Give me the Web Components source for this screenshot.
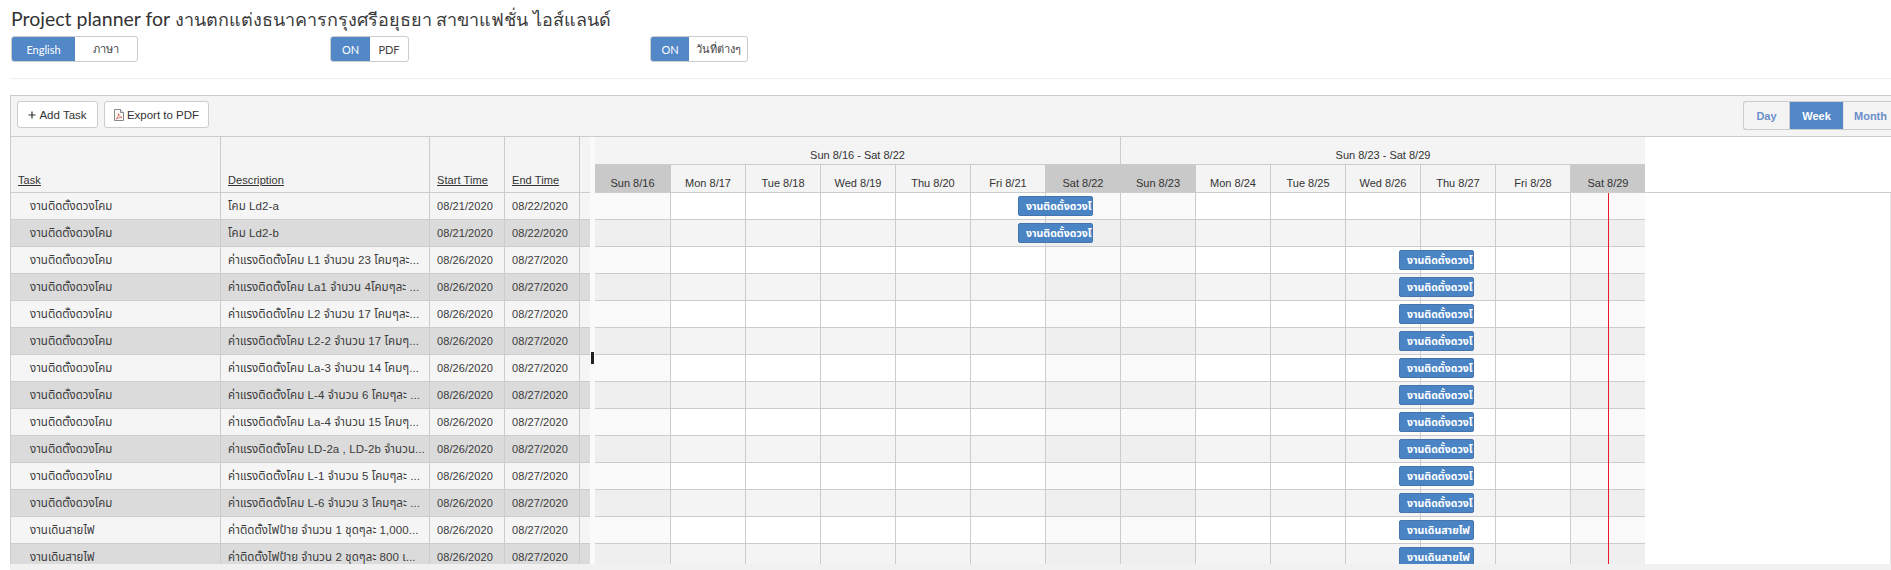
<!DOCTYPE html>
<html lang="th"><head><meta charset="utf-8"><title>Project planner</title>
<style>
html,body{margin:0;padding:0;height:570px;overflow:hidden;background:#fff;color:#333;font:11px "Liberation Sans","Noto Sans",sans-serif}
</style></head><body>
<planner-app></planner-app>
<script>
const SANS='"Liberation Sans","Noto Sans","Noto Sans Thai",sans-serif';
const def=(name,css,html,init)=>customElements.define(name,class extends HTMLElement{
  connectedCallback(){ if(this.shadowRoot)return; const r=this.attachShadow({mode:'open'}); r.innerHTML=`<style>${css}</style>${typeof html==='function'?html(this):html}`; init&&init(r,this);}
});

def('toggle-pair',`
:host{display:inline-flex;height:26px;box-sizing:border-box;border:1px solid #ccc;border-radius:3px;overflow:hidden;background:#fff;font:11px Lato,"Noto Sans",sans-serif;color:#444}
span{display:flex;align-items:center;justify-content:center;box-sizing:border-box}
.on{background:#5288c8;color:#fff;width:var(--on,38px)}
.off{flex:1}
`,h=>`<span class="on">${h.getAttribute('on')}</span><span class="off">${h.getAttribute('off')}</span>`);

def('tool-button',`
:host{display:inline-flex;align-items:center;justify-content:center;gap:3px;box-sizing:border-box;height:27px;border:1px solid #ccc;border-radius:3px;background:#fff;font:11.5px ${SANS};color:#333}
`,`<slot></slot>`);

def('range-switch',`
:host{display:flex;height:29px;box-sizing:border-box;border:1px solid #ccc;border-right:0;border-radius:3px 0 0 3px;font:700 11px ${SANS};color:#6b8fc9;background:#f4f4f4;width:148px;flex:none}
span{display:flex;align-items:center;justify-content:center}
.d{width:45px}.w{width:54px;background:#5288c8;color:#fff;border-left:1px solid #ccc;box-sizing:border-box}.m{width:48px;border-left:1px solid #e4e4e4;box-sizing:border-box;padding-left:6px}
`,`<span class="d">Day</span><span class="w">Week</span><span class="m">Month</span>`);

def('task-row',`
:host{display:grid;grid-template-columns:210px 209px 75px 75px 10px;height:27px;box-sizing:border-box;border-bottom:1px solid #ccc;background:#f5f5f5;color:#3a3a3a;font:11px ${SANS}}
:host([alt]){background:#dbdbdb}
div{box-sizing:border-box;border-right:1px solid #ccc;padding:1px 0 0 7px;display:flex;align-items:center;white-space:pre;overflow:hidden;line-height:25px}
.t{padding-left:19px;font-size:11.5px}
.ds{font-size:11.5px;letter-spacing:.08px}
.dt{letter-spacing:.08px}
div:last-child{border:0}
`,h=>`<div class="t">${h.getAttribute('task')}</div><div class="ds">${h.getAttribute('desc')}</div><div class="dt">${h.getAttribute('start')}</div><div class="dt">${h.getAttribute('end')}</div><div></div>`);

def('gantt-row',`
:host{display:grid;grid-template-columns:76px repeat(12,75px) 74px;height:27px;box-sizing:border-box;border-bottom:1px solid #ccc;background:#fff;position:relative;width:1050px}
:host([alt]){background:#f4f4f4}
i{display:block;border-right:1px solid #ccc;box-sizing:border-box}
i.we{background:#fafafa}
:host([alt]) i.we{background:#efefef}
i:last-of-type{border-right:0}
.bar{position:absolute;top:3px;height:20px;width:75px;box-sizing:border-box;border:1px solid #4475ad;border-radius:2px;background:#4a84c5;color:#fff;font:700 10.5px ${SANS};line-height:19px;padding-left:7px;white-space:nowrap;overflow:hidden}
`,h=>{let s='';for(let i=0;i<14;i++)s+=`<i class="${[0,6,7,13].includes(i)?'we':''}"></i>`;
 return s+`<div class="bar" style="left:${h.getAttribute('left')}px">${h.getAttribute('label')}</div>`});

def('task-table',`
:host{display:block;width:579px;flex:none}
.head{display:grid;grid-template-columns:210px 209px 75px 75px 10px;height:56px;box-sizing:border-box;border-bottom:1px solid #ccc;background:#f4f4f4}
.head div{box-sizing:border-box;border-right:1px solid #ccc;padding:0 0 5px 7px;display:flex;align-items:flex-end;font:11px ${SANS};color:#333;white-space:nowrap}
.head div span{text-decoration:underline;line-height:14px;letter-spacing:.08px}
.head div:last-child{border:0}
`,`<div class="head"><div><span>Task</span></div><div><span>Description</span></div><div><span>Start Time</span></div><div><span>End Time</span></div><div></div></div><slot></slot>`);

def('gantt-chart',`
:host{display:block;flex:1;min-width:0;overflow:hidden;position:relative}
.head{display:block;height:56px;box-sizing:border-box;border-bottom:1px solid #ccc}
.grid{width:1050px;height:55px;background:#f4f4f4;font:11px ${SANS};color:#333}
.wk{display:grid;grid-template-columns:526px 524px;height:28px;box-sizing:border-box;border-bottom:1px solid #ccc}
.wk div{display:flex;justify-content:center;padding-top:11px;box-sizing:border-box;line-height:14px}
.wk div:first-child{border-right:1px solid #ccc}
.dy{display:grid;grid-template-columns:76px repeat(12,75px) 74px;height:27px}
.dy div{display:flex;justify-content:center;padding-top:11px;box-sizing:border-box;line-height:14px;border-right:1px solid #ccc}
.dy div:last-child{border-right:0}
.dy .we{background:#c9c9c9;border-right-color:#c9c9c9}
.now{position:absolute;left:1013px;top:56px;bottom:0;width:1px;background:#e8172a}
.edge{position:absolute;right:0;top:56px;bottom:0;width:1px;background:#e4e4e4}
`,()=>{const n=['Sun 8/16','Mon 8/17','Tue 8/18','Wed 8/19','Thu 8/20','Fri 8/21','Sat 8/22','Sun 8/23','Mon 8/24','Tue 8/25','Wed 8/26','Thu 8/27','Fri 8/28','Sat 8/29'];
 return `<div class="head"><div class="grid"><div class="wk"><div>Sun 8/16 - Sat 8/22</div><div>Sun 8/23 - Sat 8/29</div></div><div class="dy">${n.map((d,i)=>`<div class="${[0,6,7,13].includes(i)?'we':''}">${d}</div>`).join('')}</div></div></div><slot></slot><div class="now"></div><div class="edge"></div>`});

def('gantt-panel',`
:host{display:block;margin-left:10px;height:475px;box-sizing:border-box;border-top:1px solid #ccc;overflow:hidden;position:relative}
.bar{display:flex;align-items:flex-start;height:41px;box-sizing:border-box;border-bottom:1px solid #ccc;border-left:1px solid #ccc;background:#f4f4f4;padding:5px 0 0 6px;gap:6px}
.sp{flex:1}
.body{display:flex;height:427px;border-left:1px solid #ccc;overflow:hidden}
.left{display:flex;flex:none;width:584px;overflow:hidden;position:relative;background:#fafafa}
.handle{position:absolute;left:580px;top:215px;width:3px;height:12px;background:#222}
.foot{height:7px;background:#f1f1f1;border-left:1px solid #f1f1f1}
`,`<div class="bar"><slot name="tools"></slot><div class="sp"></div><slot name="range"></slot></div><div class="body"><div class="left"><slot name="table"></slot><div class="handle"></div></div><slot name="chart"></slot></div><div class="foot"></div>`);

def('planner-app',`
:host{display:block;height:570px;overflow:hidden;font:11px ${SANS};color:#333}
h1{margin:0;padding:6px 0 0 11px;height:36px;box-sizing:border-box;font:400 19.5px/26px Lato,"Noto Sans",sans-serif;color:#333;white-space:nowrap}
h1 span{font-size:18px;font-weight:400;color:#3a3a3a}
.tg{display:flex;height:26px;padding-left:11px}
toggle-pair:nth-child(1){width:127px}
toggle-pair:nth-child(2){width:79px;margin-left:192px}
toggle-pair:nth-child(3){width:98px;margin-left:241px}
hr{margin:16px 0 16px 11px;border:0;border-top:1px solid #eee;height:0}
.add{width:81px}.exp{width:105px}
svg{display:block}
`,()=>{
 const T='งานติดตั้งดวงโคม',W='งานเดินสายไฟ',K='ค่าแรงติดตั้งโคม ';
 const rows=[[T,'โคม Ld2-a','08/21/2020','08/22/2020'],[T,'โคม Ld2-b','08/21/2020','08/22/2020'],
 [T,K+'L1 จำนวน 23 โคมๆละ...'],[T,K+'La1 จำนวน 4โคมๆละ ...'],[T,K+'L2 จำนวน 17 โคมๆละ...'],[T,K+'L2-2 จำนวน 17 โคมๆ...'],[T,K+'La-3 จำนวน 14 โคมๆ...'],[T,K+'L-4 จำนวน 6 โคมๆละ ...'],[T,K+'La-4 จำนวน 15 โคมๆ...'],[T,K+'LD-2a , LD-2b จำนวน...'],[T,K+'L-1 จำนวน 5 โคมๆละ ...'],[T,K+'L-6 จำนวน 3 โคมๆละ ...'],[W,'ค่าติดตั้งไฟป้าย จำนวน 1 ชุดๆละ 1,000...'],[W,'ค่าติดตั้งไฟป้าย จำนวน 2 ชุดๆละ 800 เ...']];
 const tr=rows.map((r,i)=>`<task-row ${i%2?'alt':''} task="${r[0]}" desc="${r[1]}" start="${r[2]||'08/26/2020'}" end="${r[3]||'08/27/2020'}"></task-row>`).join('');
 const gr=rows.map((r,i)=>`<gantt-row ${i%2?'alt':''} label="${r[0]}" left="${i<2?423:804}"></gantt-row>`).join('');
 return `<h1>Project planner for <span>งานตกแต่งธนาคารกรุงศรีอยุธยา สาขาแฟชั่น ไอส์แลนด์</span></h1>
 <div class="tg"><toggle-pair on="English" off="ภาษา" style="--on:63px"></toggle-pair><toggle-pair on="ON" off="PDF" style="--on:39px"></toggle-pair><toggle-pair on="ON" off="วันที่ต่างๆ" style="--on:38px"></toggle-pair></div>
 <hr>
 <gantt-panel>
  <tool-button slot="tools" class="add"><svg width="8" height="8" viewBox="0 0 8 8"><path d="M4 .5v7M.5 4h7" stroke="#333" stroke-width="1.2"/></svg>Add Task</tool-button>
  <tool-button slot="tools" class="exp"><svg width="10" height="12" viewBox="0 0 10 12" fill="none"><path d="M.5.5h6l3 3v8h-9z" stroke="#888" fill="#fbfaf6"/><path d="M6.500.5v3h3" stroke="#888" fill="#eee"/><path d="M2 10c1.500-1 2.500-3 2.500-5.500C5 7 6 8 8 8.300 6 8.300 4 9 2 10z" stroke="#c9534a" stroke-width=".7"/></svg>Export to PDF</tool-button>
  <range-switch slot="range"></range-switch>
  <task-table slot="table">${tr}</task-table>
  <gantt-chart slot="chart">${gr}</gantt-chart>
 </gantt-panel>`});
</script>
</body></html>
